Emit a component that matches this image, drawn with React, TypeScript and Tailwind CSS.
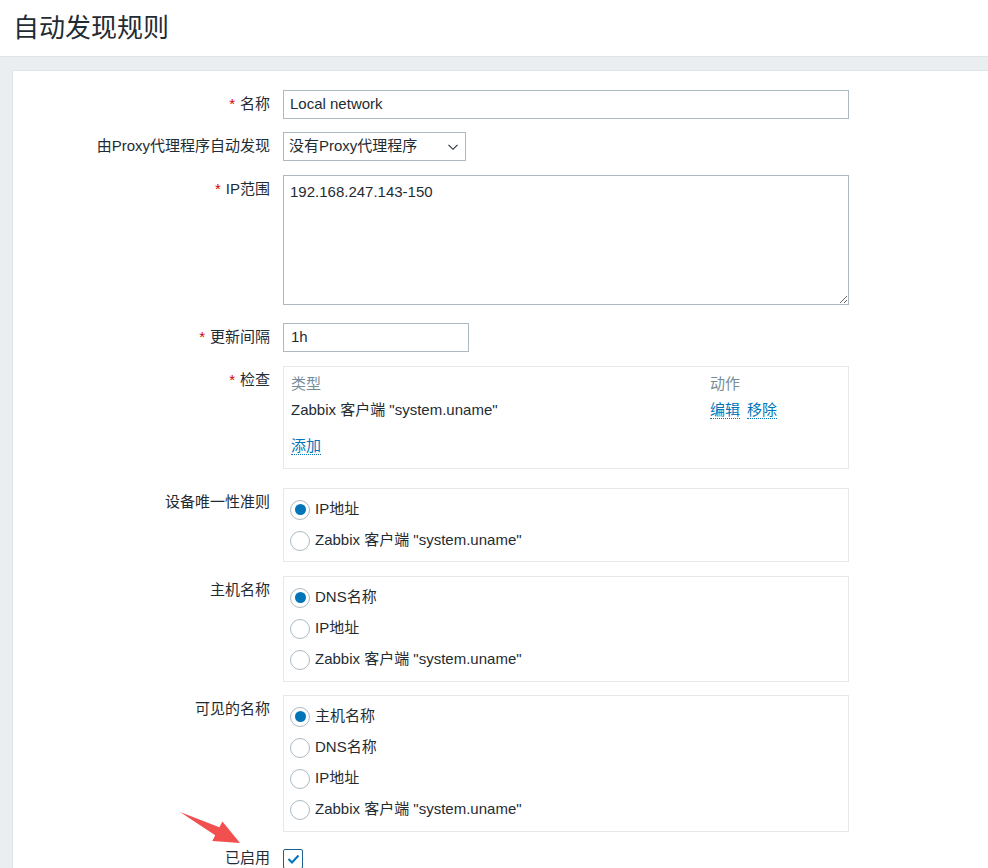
import type { ReactNode } from "react";

const FONT = { fontFamily: '"Liberation Sans", "Noto Sans CJK SC", sans-serif' };

function Label({ text, required }: { text: string; required?: boolean }) {
  return (
    <div className="flex h-[29px] w-[270px] shrink-0 items-center justify-end pr-[13px]">
      {required && <span className="mr-[5px] text-[#d40000]">*</span>}
      <span>{text}</span>
    </div>
  );
}

function Row({ label, required, className, children }: { label: string; required?: boolean; className?: string; children: ReactNode }) {
  return (
    <div className={`flex ${className ?? ""}`}>
      <Label text={label} required={required} />
      {children}
    </div>
  );
}

function Radio({ checked, label }: { checked?: boolean; label: string }) {
  return (
    <div className="flex h-[31px] items-center">
      <span className="flex h-[20px] w-[20px] items-center justify-center rounded-full border border-[#acbbc2] bg-white">
        {checked && <span className="h-[11px] w-[11px] rounded-full bg-[#0275b8]" />}
      </span>
      <span className="ml-[5px]">{label}</span>
    </div>
  );
}

function RadioBox({ options, checked, className }: { options: string[]; checked: number; className?: string }) {
  return (
    <div className={`w-[566px] border border-[#e6e9eb] px-[6px] py-[5px] ${className ?? ""}`}>
      {options.map((o, i) => (
        <Radio key={o} label={o} checked={i === checked} />
      ))}
    </div>
  );
}

function Link({ children }: { children: ReactNode }) {
  return <span className="border-b border-dotted border-[#0275b8] leading-[17px] text-[#0275b8]">{children}</span>;
}

export default function App() {
  const agent = 'Zabbix 客户端 "system.uname"';
  return (
    <div className="relative min-h-[868px] overflow-hidden bg-[#ebeef0] text-[15px] text-[#1f2c33]" style={FONT}>
      <header className="flex h-[57px] items-center border-b border-[#dfe4e7] bg-white pl-[13px]">
        <h1 className="text-[26px] leading-none">自动发现规则</h1>
      </header>

      <div className="ml-[12px] mt-[13px] border-l border-t border-[#dfe4e7] bg-white pb-[20px] pt-[19px]">
        <Row label="名称" required>
          <div className="flex h-[29px] w-[566px] items-center border border-[#acbbc2] px-[6px]">Local network</div>
        </Row>

        <Row label="由Proxy代理程序自动发现" className="mt-[13px]">
          <div className="flex h-[29px] w-[183px] items-center justify-between border border-[#acbbc2] pl-[5px] pr-[6px]">
            <span>没有Proxy代理程序</span>
            <svg width="12" height="8" viewBox="0 0 12 8" fill="none" stroke="#1f2c33" strokeWidth="1.1">
              <path d="M1.5 1.8l4.5 4.5 4.5-4.5" />
            </svg>
          </div>
        </Row>

        <Row label="IP范围" required className="mt-[14px]">
          <textarea
            readOnly
            value="192.168.247.143-150"
            className="h-[130px] w-[566px] border border-[#acbbc2] px-[6px] py-[5px] text-[#1f2c33] outline-none"
          />
        </Row>

        <Row label="更新间隔" required className="mt-[18px]">
          <div className="flex h-[29px] w-[186px] items-center border border-[#acbbc2] px-[7px]">1h</div>
        </Row>

        <Row label="检查" required className="mt-[14px]">
          <div className="w-[566px] border border-[#e6e9eb] px-[7px] pb-[7px] pt-[6px]">
            <div className="grid h-[22px] grid-cols-[419px_1fr] items-center text-[#768d99]">
              <span>类型</span>
              <span>动作</span>
            </div>
            <div className="grid h-[30px] grid-cols-[419px_1fr] items-center">
              <span>{agent}</span>
              <span className="flex gap-[7px]">
                <Link>编辑</Link>
                <Link>移除</Link>
              </span>
            </div>
            <div className="mt-[6px] flex h-[30px] items-center">
              <Link>添加</Link>
            </div>
          </div>
        </Row>

        <Row label="设备唯一性准则" className="mt-[19px]">
          <RadioBox options={["IP地址", agent]} checked={0} />
        </Row>

        <Row label="主机名称" className="mt-[14px]">
          <RadioBox options={["DNS名称", "IP地址", agent]} checked={0} className="pb-[6px]" />
        </Row>

        <Row label="可见的名称" className="mt-[13px]">
          <RadioBox options={["主机名称", "DNS名称", "IP地址", agent]} checked={0} className="pb-[6px]" />
        </Row>

        <div className="mt-[12px] flex items-center">
          <div className="flex h-[29px] w-[270px] shrink-0 items-center justify-end pr-[13px]">已启用</div>
          <span className="flex h-[20px] w-[20px] items-center justify-center rounded-[2px] border border-[#1d5f8f] bg-white">
            <svg width="13" height="10" viewBox="0 0 13 10" fill="none" stroke="#0275b8" strokeWidth="2">
              <path d="M1.5 5l3.5 3.5 6.5-7" />
            </svg>
          </span>
        </div>
      </div>

      {/* red pointer arrow */}
      <svg className="pointer-events-none absolute left-0 top-0" width="988" height="868">
        <polygon
          points="180,812 219.4,827.3 222.4,821.5 240,843 212.3,841.1 215.2,835.3"
          fill="#f24f4f"
        />
      </svg>
    </div>
  );
}
